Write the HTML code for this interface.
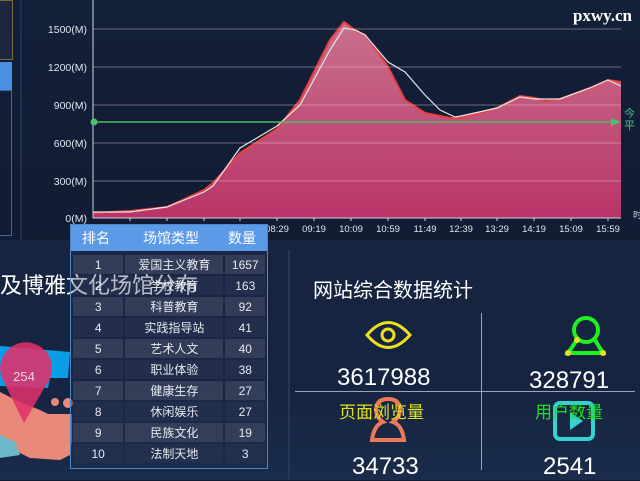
<!DOCTYPE html>
<html><head><meta charset="utf-8"><style>
body{margin:0;width:640px;height:480px;overflow:hidden;background:#111b30;font-family:"Liberation Sans","Noto Sans CJK SC",sans-serif;position:relative}
.a{position:absolute}
table{border-collapse:separate;border-spacing:2px 2px;}
</style></head><body>
<div class="a" style="left:0;top:0;width:640px;height:240px;background:linear-gradient(180deg,#13203a,#121c33)"></div>
<div class="a" style="left:0;top:240px;width:640px;height:240px;background:linear-gradient(180deg,#16243f,#152440 60%,#1a2c4a)"></div>
<div class="a" style="left:0;top:0;width:12px;height:58px;border:1px solid #7a6a3a;border-left:none;background:#1c2640"></div>
<div class="a" style="left:0;top:62px;width:12px;height:28px;background:#4a8fe0"></div>
<div class="a" style="left:0;top:90px;width:12px;height:146px;border:1px solid #3a6aa8;border-left:none;box-sizing:border-box"></div>
<div class="a" style="left:20px;top:0;width:2px;height:240px;background:#1d3050"></div>
<svg class="a" style="left:0;top:0" width="640" height="240">
<defs><linearGradient id="g" x1="0" y1="0" x2="0" y2="1"><stop offset="0" stop-color="#c9708e"/><stop offset="1" stop-color="#b93468"/></linearGradient></defs>
<g font-size="10.5" fill="#dfe6f0" text-anchor="end">
<text x="87" y="33">1500(M)</text><text x="87" y="71">1200(M)</text><text x="87" y="109">900(M)</text><text x="87" y="147">600(M)</text><text x="87" y="185">300(M)</text><text x="87" y="222">0(M)</text></g>
<path d="M93 213L130 211L167 207L204 190L213 183L240 153L277 129L300 100L330 40L344 22L355 30L365 35L387 65L405 100L425 113L450 118L460 118L497 108L520 96L535 98L545 101L560 99L590 88L608 80L621 82L621 218L93 218Z" fill="url(#g)"/>
<path d="M93 213L130 211L167 207L204 190L213 183L240 153L277 129L300 100L330 40L344 22L355 30L365 35L387 65L405 100L425 113L450 118L460 118L497 108L520 96L535 98L545 101L560 99L590 88L608 80L621 82" fill="none" stroke="#e8403f" stroke-width="2"/>
<path d="M93 212L130 212L167 207L204 192L213 186L240 148L277 126L300 105L330 50L344 28L355 30L365 35L388 62L405 72L425 95L440 110L455 117L461 116L497 108L520 97L535 99L560 99L590 88L608 80L621 86" fill="none" stroke="#e6e6e6" stroke-width="1.2"/>
<g stroke="#e0c8d4" stroke-opacity=".45" stroke-width="1"><line x1="93" y1="29" x2="621" y2="29"/><line x1="93" y1="67" x2="621" y2="67"/><line x1="93" y1="105" x2="621" y2="105"/><line x1="93" y1="143" x2="621" y2="143"/><line x1="93" y1="181" x2="621" y2="181"/></g>
<line x1="93" y1="0" x2="93" y2="218" stroke="#cfd4dc"/>
<line x1="93" y1="218" x2="621" y2="218" stroke="#cfd4dc"/>
<line x1="93" y1="122" x2="612" y2="122" stroke="#4cb86a" stroke-width="1.5"/>
<circle cx="94" cy="122" r="3.5" fill="#4cc06a"/><path d="M611 118L621 122L611 126Z" fill="#4cc06a"/>
<text x="624" y="117" font-size="11" fill="#4cc08a">今</text><text x="624" y="129" font-size="11" fill="#4cc08a">平</text>
<text x="633" y="218" font-size="9" fill="#cfd4dc">时</text>
<g fill="#dfe6f0" font-size="9.5" text-anchor="middle">
<text x="277" y="232">08:29</text><text x="314" y="232">09:19</text><text x="351" y="232">10:09</text><text x="388" y="232">10:59</text><text x="425" y="232">11:49</text><text x="461" y="232">12:39</text><text x="497" y="232">13:29</text><text x="534" y="232">14:19</text><text x="571" y="232">15:09</text><text x="608" y="232">15:59</text></g>
<g stroke="#cfd4dc"><line x1="130" y1="218" x2="130" y2="221"/><line x1="167" y1="218" x2="167" y2="221"/><line x1="204" y1="218" x2="204" y2="221"/><line x1="240" y1="218" x2="240" y2="221"/><line x1="277" y1="218" x2="277" y2="221"/><line x1="314" y1="218" x2="314" y2="221"/><line x1="351" y1="218" x2="351" y2="221"/><line x1="388" y1="218" x2="388" y2="221"/><line x1="425" y1="218" x2="425" y2="221"/><line x1="461" y1="218" x2="461" y2="221"/><line x1="497" y1="218" x2="497" y2="221"/><line x1="534" y1="218" x2="534" y2="221"/><line x1="571" y1="218" x2="571" y2="221"/><line x1="608" y1="218" x2="608" y2="221"/></g>
<text x="632" y="21" font-family="Liberation Serif" font-weight="bold" font-size="17" fill="#fff" text-anchor="end">pxwy.cn</text>
</svg>
<!-- map -->
<svg class="a" style="left:0;top:330px" width="80" height="150">
<path d="M0 16L70 22L68 48L50 48L48 58L0 56Z" fill="#0a9ee8"/>
<path d="M0 62L20 72L40 80L48 84L72 84L72 110L70 125L60 130L30 128L10 118L0 110Z" fill="#e8897a"/>
<circle cx="55" cy="72" r="4" fill="#e8897a"/><circle cx="68" cy="73" r="5" fill="#e8897a"/>
<path d="M0 105L15 112L20 125L0 128Z" fill="#6ab8c8"/>
<path d="M2 48A26 26 0 1 1 46 55L24 93Z" fill="#e0306a" opacity=".88"/>
<text x="24" y="51" font-size="13" fill="#f2d0da" text-anchor="middle">254</text>
</svg>
<div class="a" style="left:0;top:268px;font-size:22px;color:#fff;white-space:nowrap">及博雅文化场馆分布</div>
<!-- table -->
<div class="a" style="left:70px;top:224px;width:196px;height:243px;border:1px solid #4a88c8;background:rgba(30,45,75,.45)">
<div style="height:26px;background:#5a9ae6;color:#fff;font-size:14px;line-height:26px;position:relative">
<span class="a" style="left:11px">排名</span><span class="a" style="left:72px">场馆类型</span><span class="a" style="left:157px">数量</span></div>
<table style="position:absolute;left:0;top:28px;font-size:12px;color:#e6eaf0;text-align:center">
<tr style="height:18.7px"><td style="width:50px;background:rgba(60,70,95,.75)">1</td><td style="width:100px;background:rgba(60,70,95,.75)">爱国主义教育</td><td style="width:38px;background:rgba(60,70,95,.75)">1657</td></tr>
<tr style="height:18.7px"><td style="background:rgba(40,52,80,.6)">2</td><td style="background:rgba(40,52,80,.6)">学校教育</td><td style="background:rgba(40,52,80,.6)">163</td></tr>
<tr style="height:18.7px"><td style="background:rgba(60,70,95,.75)">3</td><td style="background:rgba(60,70,95,.75)">科普教育</td><td style="background:rgba(60,70,95,.75)">92</td></tr>
<tr style="height:18.7px"><td style="background:rgba(40,52,80,.6)">4</td><td style="background:rgba(40,52,80,.6)">实践指导站</td><td style="background:rgba(40,52,80,.6)">41</td></tr>
<tr style="height:18.7px"><td style="background:rgba(60,70,95,.75)">5</td><td style="background:rgba(60,70,95,.75)">艺术人文</td><td style="background:rgba(60,70,95,.75)">40</td></tr>
<tr style="height:18.7px"><td style="background:rgba(40,52,80,.6)">6</td><td style="background:rgba(40,52,80,.6)">职业体验</td><td style="background:rgba(40,52,80,.6)">38</td></tr>
<tr style="height:18.7px"><td style="background:rgba(60,70,95,.75)">7</td><td style="background:rgba(60,70,95,.75)">健康生存</td><td style="background:rgba(60,70,95,.75)">27</td></tr>
<tr style="height:18.7px"><td style="background:rgba(40,52,80,.6)">8</td><td style="background:rgba(40,52,80,.6)">休闲娱乐</td><td style="background:rgba(40,52,80,.6)">27</td></tr>
<tr style="height:18.7px"><td style="background:rgba(60,70,95,.75)">9</td><td style="background:rgba(60,70,95,.75)">民族文化</td><td style="background:rgba(60,70,95,.75)">19</td></tr>
<tr style="height:18.7px"><td style="background:rgba(40,52,80,.6)">10</td><td style="background:rgba(40,52,80,.6)">法制天地</td><td style="background:rgba(40,52,80,.6)">3</td></tr>
</table></div>
<div class="a" style="left:0;top:268px;font-size:22px;color:rgba(255,255,255,.55);white-space:nowrap;clip-path:inset(0 0 0 71px)">及博雅文化场馆分布</div>
<!-- right stats -->
<div class="a" style="left:288px;top:250px;width:2px;height:230px;background:#22385a"></div>
<div class="a" style="left:313px;top:274px;font-size:20px;color:#fff">网站综合数据统计</div>
<div class="a" style="left:481px;top:313px;width:1px;height:157px;background:#9aa4b4"></div>
<div class="a" style="left:295px;top:391px;width:340px;height:1px;background:#9aa4b4"></div>
<svg class="a" style="left:280px;top:300px" width="360" height="160">
<path d="M87 35Q108 10 130 35Q108 60 87 35Z" fill="none" stroke="#ede01c" stroke-width="3"/>
<circle cx="108" cy="35" r="6" fill="none" stroke="#ede01c" stroke-width="3"/>
<circle cx="306" cy="30" r="12" fill="none" stroke="#1ff01f" stroke-width="4"/>
<path d="M297 40L288 53L323 53L315 40" fill="none" stroke="#1ff01f" stroke-width="4"/>
<circle cx="288" cy="53" r="3" fill="#e8e020"/><circle cx="323" cy="53" r="3" fill="#e8e020"/><circle cx="297" cy="40" r="3" fill="#e8e020"/>
<path d="M92 140Q94 125 103 122Q96 117 96 109Q97 99 108 99Q119 99 120 109Q120 117 113 122Q122 125 124 140Z" fill="none" stroke="#ec7a5a" stroke-width="4"/>
<rect x="275" y="103" width="38" height="36" rx="5" fill="none" stroke="#36d2d2" stroke-width="4"/>
<path d="M290 112L303 121L290 130Z" fill="#36d2d2"/>
</svg>
<div class="a" style="left:337px;top:364px;font-size:24px;color:#fff">3617988</div>
<div class="a" style="left:529px;top:367px;font-size:24px;color:#fff">328791</div>
<div class="a" style="left:339px;top:398px;font-size:17px;color:#e0e020">页面浏览量</div>
<div class="a" style="left:535px;top:398px;font-size:17px;color:#1fe01f">用户数量</div>
<div class="a" style="left:352px;top:453px;font-size:24px;color:#fff">34733</div>
<div class="a" style="left:543px;top:453px;font-size:24px;color:#fff">2541</div>
</body></html>
